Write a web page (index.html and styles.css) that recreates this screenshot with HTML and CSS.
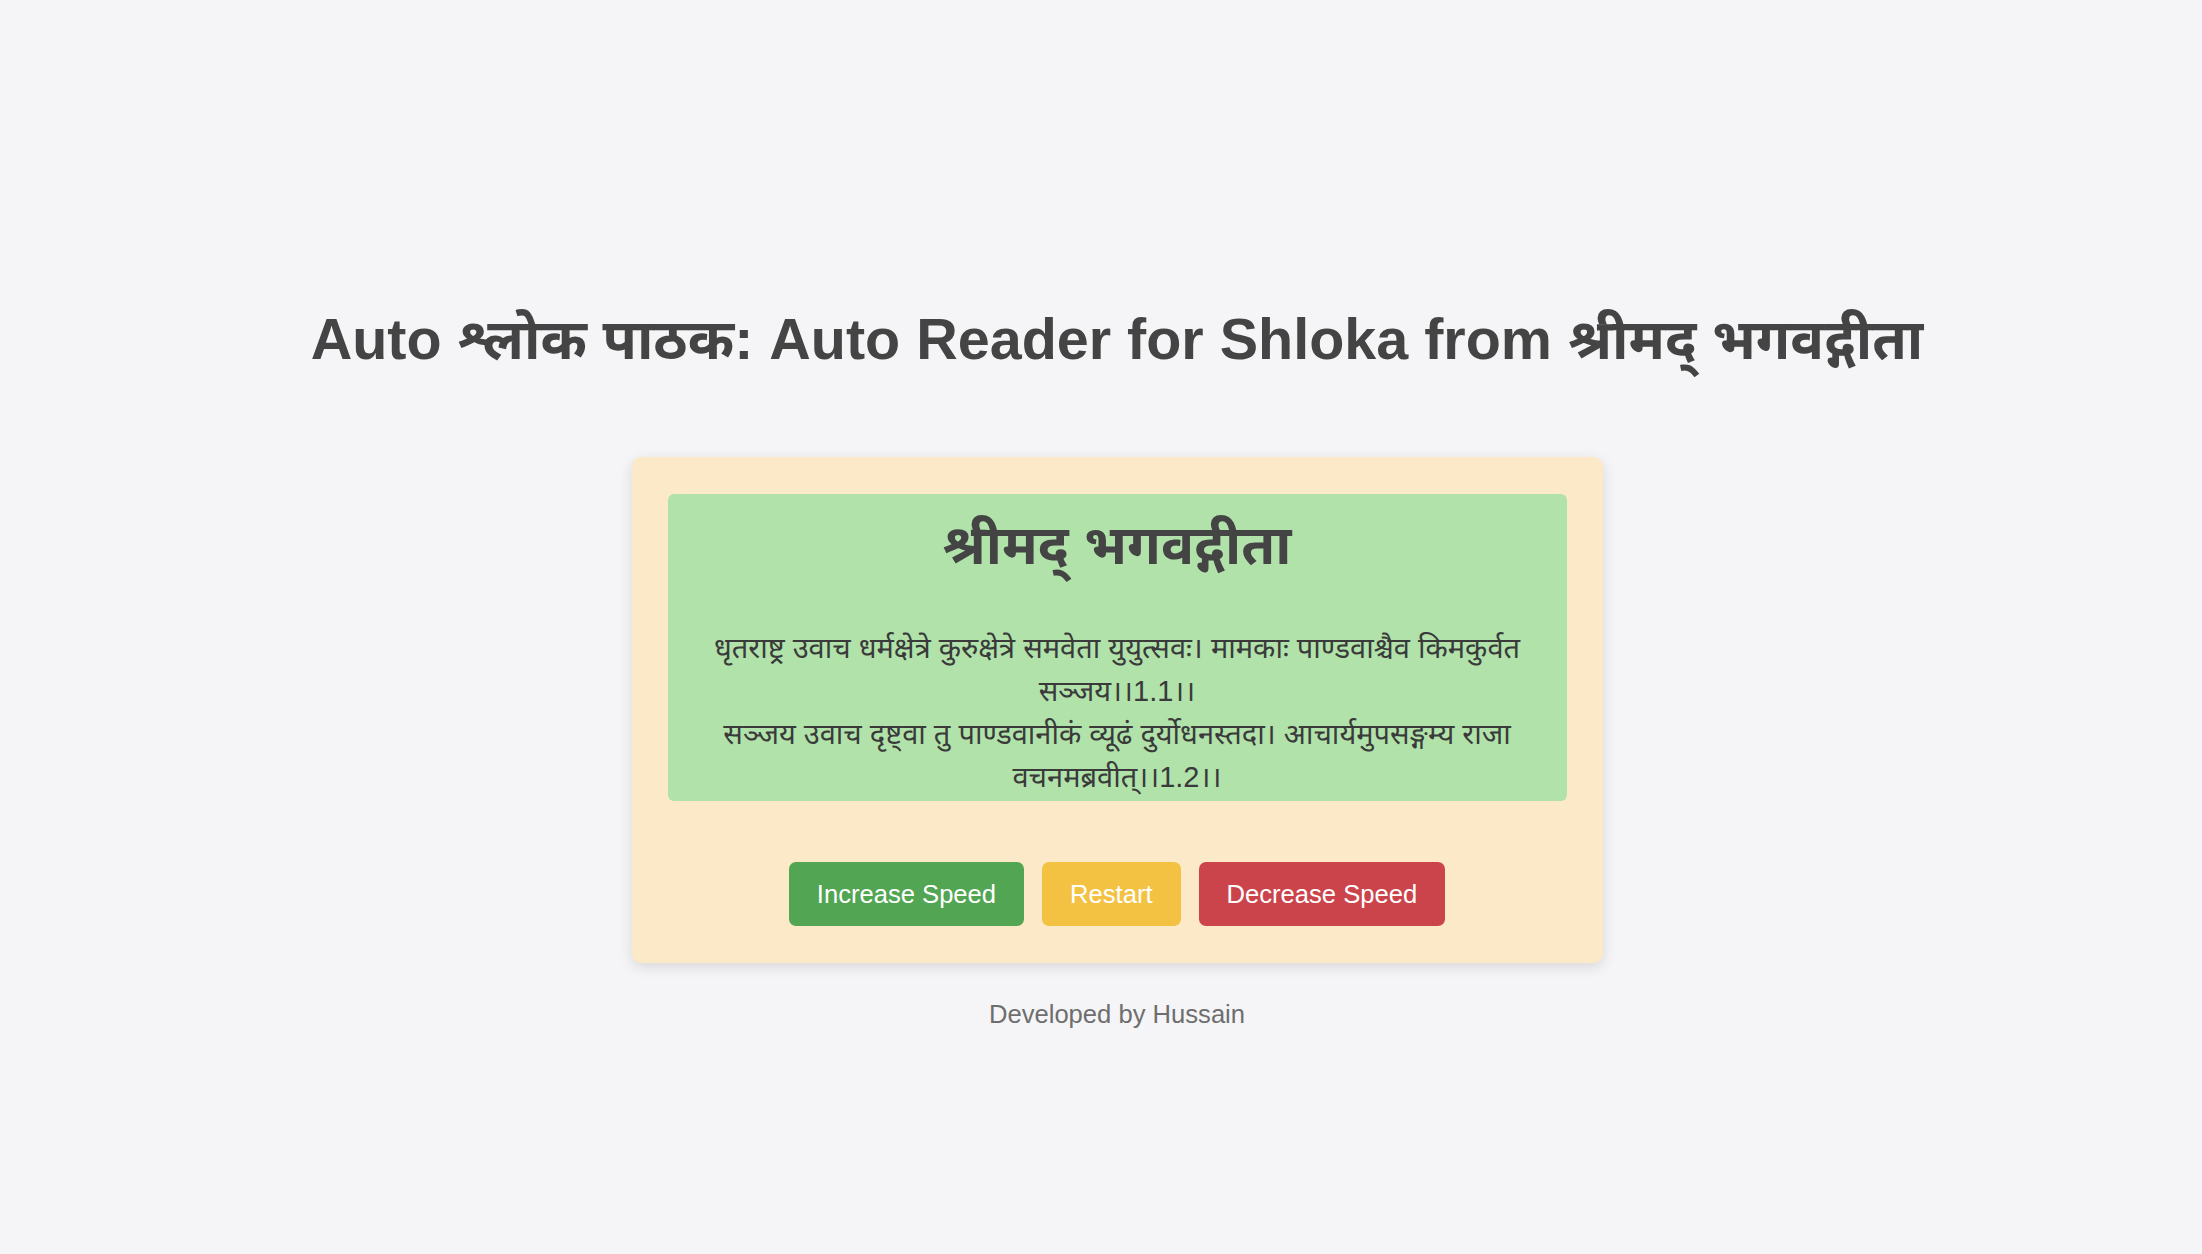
FILE: index.html
```html
<!DOCTYPE html>
<html lang="hi">
<head>
<meta charset="utf-8">
<title>Auto श्लोक पाठक</title>
<link rel="stylesheet" href="styles.css">
</head>
<body>
<main class="page">
  <h1 class="title">Auto <span class="deva">श्लोक पाठक</span>: Auto Reader for Shloka from <span class="deva">श्रीमद् भगवद्गीता</span></h1>
  <section class="card">
    <div class="reader">
      <h2 class="reader-title">श्रीमद् भगवद्गीता</h2>
      <p class="verse">धृतराष्ट्र उवाच धर्मक्षेत्रे कुरुक्षेत्रे समवेता युयुत्सवः। मामकाः पाण्डवाश्चैव किमकुर्वत <span class="nobreak">सञ्जय।।1.1।।</span><br>सञ्जय उवाच दृष्ट्वा तु पाण्डवानीकं व्यूढं दुर्योधनस्तदा। आचार्यमुपसङ्गम्य राजा <span class="nobreak">वचनमब्रवीत्।।1.2।।</span></p>
    </div>
    <div class="controls">
      <button class="btn btn-increase">Increase Speed</button>
      <button class="btn btn-restart">Restart</button>
      <button class="btn btn-decrease">Decrease Speed</button>
    </div>
  </section>
  <footer class="footer">Developed by Hussain</footer>
</main>
</body>
</html>
```

FILE: styles.css
```css
html, body {
  margin: 0;
  padding: 0;
}

body {
  background: #f5f5f7;
  font-family: "Liberation Sans", Arial, "Noto Sans Devanagari", "Noto Sans", sans-serif;
  color: #444444;
}

.page {
  display: flex;
  flex-direction: column;
  align-items: center;
  padding-top: 307px;
  padding-left: 32px;
}

.title {
  margin: 0;
  font-size: 57.5px;
  line-height: 64px;
  font-weight: bold;
  color: #444444;
  text-align: center;
}

.title .deva {
  font-size: 56px;
}

.card {
  margin-top: 85px;
  width: 971px;
  box-sizing: border-box;
  padding: 37px 36px 37px 36px;
  background: #fbe9c8;
  border-radius: 9px;
  box-shadow: 0 4px 14px rgba(0, 0, 0, 0.12);
}

.reader {
  height: 307px;
  overflow: hidden;
  background: #b0e2aa;
  border-radius: 6px;
  padding: 0 30px;
  text-align: center;
}

.reader-title {
  margin: 18px 0 0;
  font-size: 55px;
  line-height: 66px;
  font-weight: bold;
  color: #444444;
}

.verse {
  margin: 49px 0 0;
  font-size: 29px;
  line-height: 43px;
  color: #3a3a3a;
}

.nobreak {
  white-space: nowrap;
}

.controls {
  display: flex;
  justify-content: center;
  gap: 18px;
  margin-top: 61px;
}

.btn {
  height: 64px;
  padding: 0 28px;
  border: none;
  border-radius: 7px;
  font-family: "Liberation Sans", Arial, sans-serif;
  font-size: 25.6px;
  color: #ffffff;
  cursor: pointer;
}

.btn-increase { background: #52a552; }
.btn-restart { background: #f4c243; }
.btn-decrease { background: #cc444b; }

.footer {
  margin-top: 36px;
  font-size: 25.6px;
  line-height: 30px;
  color: #6e6e6e;
}
```
